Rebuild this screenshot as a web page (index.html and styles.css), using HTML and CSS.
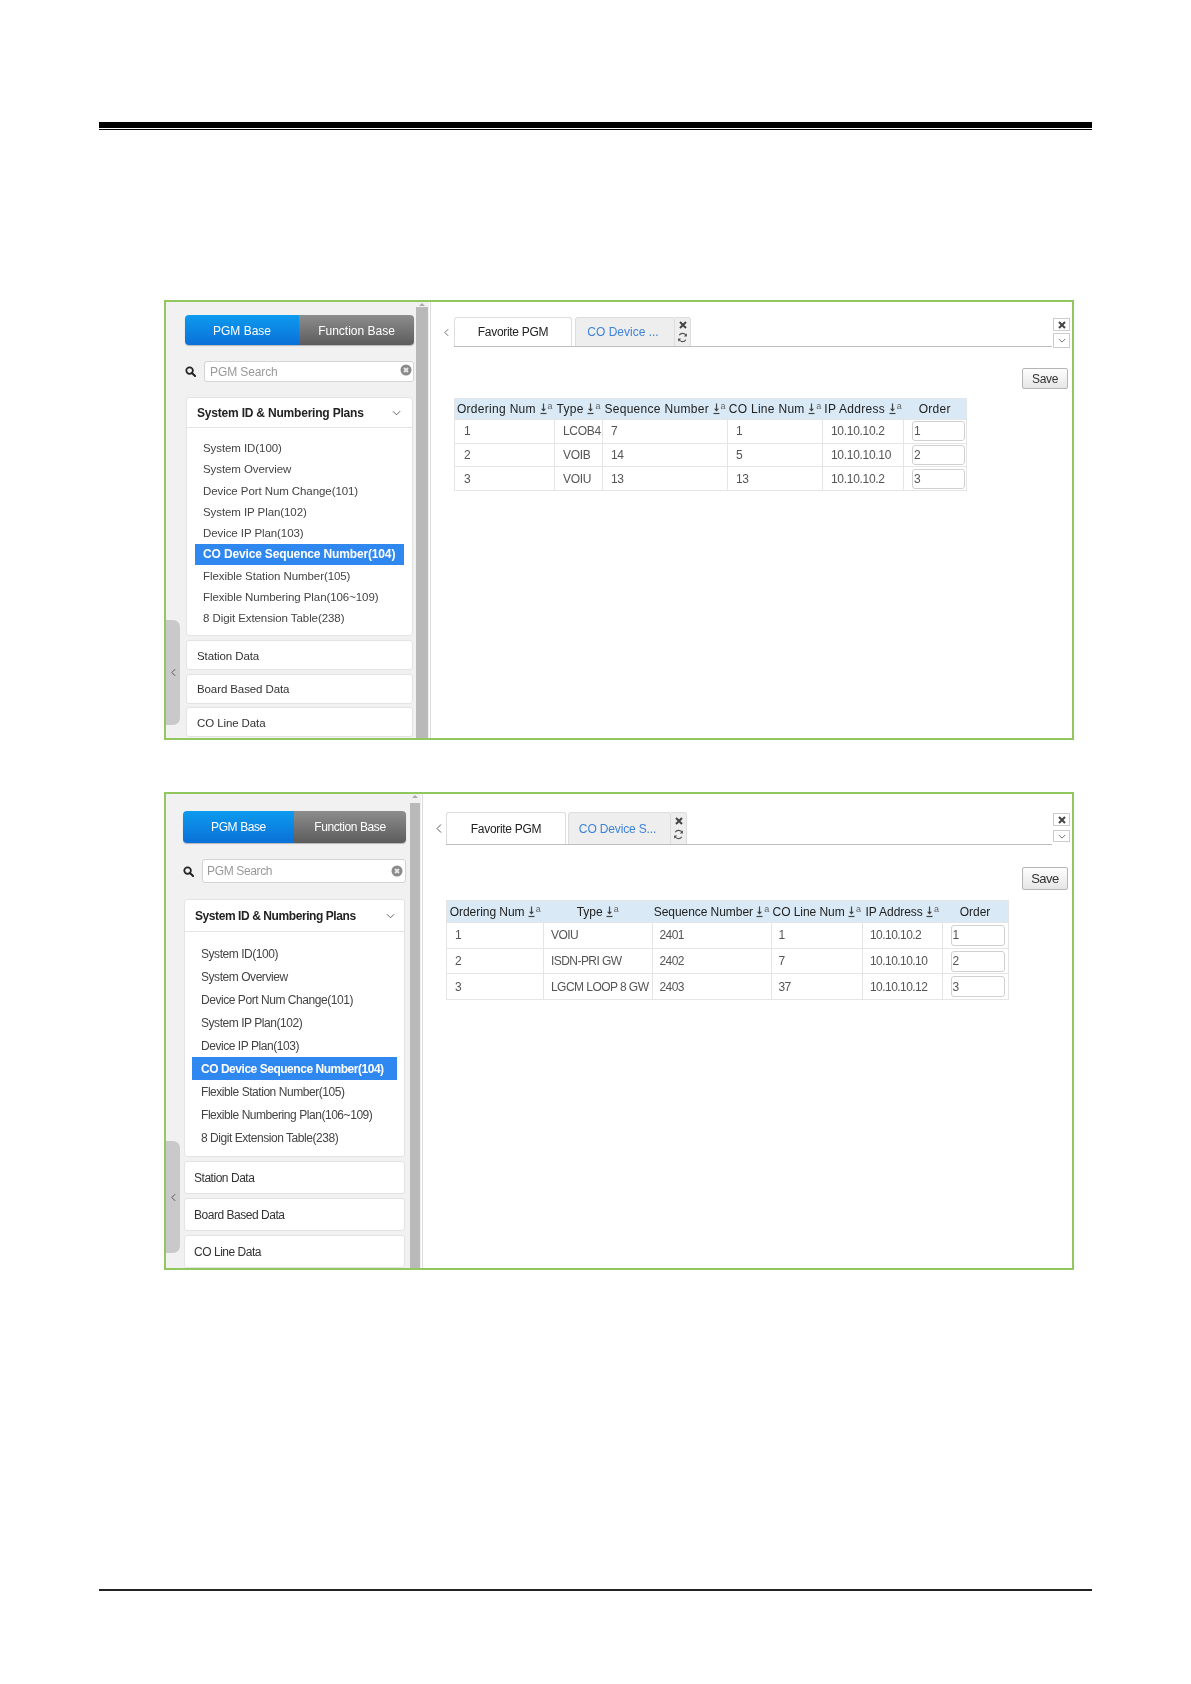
FILE: index.html
```html
<!DOCTYPE html>
<html lang="en">
<head>
<meta charset="utf-8">
<title>CO Device Sequence Number</title>
<link rel="stylesheet" href="styles.css">
</head>
<body>
<svg class="defs" width="0" height="0" aria-hidden="true">
  <symbol id="i-search" viewBox="0 0 12 12"><circle cx="5" cy="5" r="3.6" fill="none" stroke="currentColor" stroke-width="1.9"/><path d="M7.6 7.6 11 11" stroke="currentColor" stroke-width="2.2" stroke-linecap="round"/></symbol>
  <symbol id="i-clear" viewBox="0 0 12 12"><circle cx="6" cy="6" r="5.5" fill="#8a8a8a"/><path d="M4 4l4 4M8 4l-4 4" stroke="#e8e8e8" stroke-width="1.8"/></symbol>
  <symbol id="i-down" viewBox="0 0 10 6"><path d="M1 1l4 4 4-4" fill="none" stroke="currentColor" stroke-width="1"/></symbol>
  <symbol id="i-left" viewBox="0 0 6 10"><path d="M5 1 1 5l4 4" fill="none" stroke="currentColor" stroke-width="1"/></symbol>
  <symbol id="i-x" viewBox="0 0 8 8"><path d="M1 1l6 6M7 1 1 7" stroke="currentColor" stroke-width="2"/></symbol>
  <symbol id="i-refresh" viewBox="0 0 12 12"><path d="M10 4.2A4.2 4.2 0 0 0 2.4 3.6M2 7.8a4.2 4.2 0 0 0 7.6.6" fill="none" stroke="currentColor" stroke-width="1.3"/><path d="M10.8 1.4v3.4H7.4zM1.2 10.6V7.2h3.4z" fill="currentColor"/></symbol>
  <symbol id="i-sort" viewBox="0 0 7 12"><path d="M3.5 1v7" stroke="currentColor" stroke-width="1.2"/><path d="M1 6.2 3.5 9 6 6.2z" fill="currentColor"/><path d="M.5 11h6" stroke="currentColor" stroke-width="1.2"/></symbol>
</svg>

<main class="page">
  <div class="rule-heavy"></div>
  <div class="rule-thin"></div>

  <section class="panel panel-a">
    <aside class="sidebar">
      <div class="segment"><span class="seg seg-on">PGM Base</span><span class="seg seg-off">Function Base</span></div>
      <div class="search">
        <svg class="search-icon"><use href="#i-search"/></svg>
        <div class="search-box"><span>PGM Search</span><svg class="clear-icon"><use href="#i-clear"/></svg></div>
      </div>
      <div class="card">
        <div class="card-head"><span>System ID &amp; Numbering Plans</span><svg class="head-chev"><use href="#i-down"/></svg></div>
        <ul class="menu">
          <li>System ID(100)</li>
          <li>System Overview</li>
          <li>Device Port Num Change(101)</li>
          <li>System IP Plan(102)</li>
          <li>Device IP Plan(103)</li>
          <li class="active">CO Device Sequence Number(104)</li>
          <li>Flexible Station Number(105)</li>
          <li>Flexible Numbering Plan(106~109)</li>
          <li>8 Digit Extension Table(238)</li>
        </ul>
      </div>
      <div class="group">Station Data</div>
      <div class="group">Board Based Data</div>
      <div class="group">CO Line Data</div>
      <div class="handle"><svg class="handle-chev"><use href="#i-left"/></svg></div>
    </aside>
    <div class="scroll"><span class="scroll-arrow"></span><span class="scroll-thumb"></span></div>
    <div class="content">
      <div class="toolbar">
        <svg class="tab-back"><use href="#i-left"/></svg>
        <div class="strip">
          <div class="tab tab-fav">Favorite PGM</div>
          <div class="tab tab-co">CO Device ...</div>
          <div class="tab-tools"><svg class="tool-x"><use href="#i-x"/></svg><svg class="tool-r"><use href="#i-refresh"/></svg></div>
        </div>
        <div class="win">
          <span class="win-btn win-x"><svg class="tool-x"><use href="#i-x"/></svg></span>
          <span class="win-btn win-d"><svg class="win-chev"><use href="#i-down"/></svg></span>
        </div>
      </div>
      <div class="actions"><button class="save" type="button">Save</button></div>
      <table class="grid">
        <colgroup><col class="c1"><col class="c2"><col class="c3"><col class="c4"><col class="c5"><col class="c6"></colgroup>
        <thead><tr>
          <th>Ordering Num <svg class="sort"><use href="#i-sort"/></svg><sup>a</sup></th>
          <th>Type <svg class="sort"><use href="#i-sort"/></svg><sup>a</sup></th>
          <th>Sequence Number <svg class="sort"><use href="#i-sort"/></svg><sup>a</sup></th>
          <th>CO Line Num <svg class="sort"><use href="#i-sort"/></svg><sup>a</sup></th>
          <th>IP Address <svg class="sort"><use href="#i-sort"/></svg><sup>a</sup></th>
          <th>Order</th>
        </tr></thead>
        <tbody>
          <tr><td>1</td><td>LCOB4</td><td>7</td><td>1</td><td>10.10.10.2</td><td class="cell-input"><input class="order" value="1"></td></tr>
          <tr><td>2</td><td>VOIB</td><td>14</td><td>5</td><td>10.10.10.10</td><td class="cell-input"><input class="order" value="2"></td></tr>
          <tr><td>3</td><td>VOIU</td><td>13</td><td>13</td><td>10.10.10.2</td><td class="cell-input"><input class="order" value="3"></td></tr>
        </tbody>
      </table>
    </div>
  </section>

  <section class="panel panel-b">
    <aside class="sidebar">
      <div class="segment"><span class="seg seg-on">PGM Base</span><span class="seg seg-off">Function Base</span></div>
      <div class="search">
        <svg class="search-icon"><use href="#i-search"/></svg>
        <div class="search-box"><span>PGM Search</span><svg class="clear-icon"><use href="#i-clear"/></svg></div>
      </div>
      <div class="card">
        <div class="card-head"><span>System ID &amp; Numbering Plans</span><svg class="head-chev"><use href="#i-down"/></svg></div>
        <ul class="menu">
          <li>System ID(100)</li>
          <li>System Overview</li>
          <li>Device Port Num Change(101)</li>
          <li>System IP Plan(102)</li>
          <li>Device IP Plan(103)</li>
          <li class="active">CO Device Sequence Number(104)</li>
          <li>Flexible Station Number(105)</li>
          <li>Flexible Numbering Plan(106~109)</li>
          <li>8 Digit Extension Table(238)</li>
        </ul>
      </div>
      <div class="group">Station Data</div>
      <div class="group">Board Based Data</div>
      <div class="group">CO Line Data</div>
      <div class="handle"><svg class="handle-chev"><use href="#i-left"/></svg></div>
    </aside>
    <div class="scroll"><span class="scroll-arrow"></span><span class="scroll-thumb"></span></div>
    <div class="content">
      <div class="toolbar">
        <svg class="tab-back"><use href="#i-left"/></svg>
        <div class="strip">
          <div class="tab tab-fav">Favorite PGM</div>
          <div class="tab tab-co">CO Device S...</div>
          <div class="tab-tools"><svg class="tool-x"><use href="#i-x"/></svg><svg class="tool-r"><use href="#i-refresh"/></svg></div>
        </div>
        <div class="win">
          <span class="win-btn win-x"><svg class="tool-x"><use href="#i-x"/></svg></span>
          <span class="win-btn win-d"><svg class="win-chev"><use href="#i-down"/></svg></span>
        </div>
      </div>
      <div class="actions"><button class="save" type="button">Save</button></div>
      <table class="grid">
        <colgroup><col class="c1"><col class="c2"><col class="c3"><col class="c4"><col class="c5"><col class="c6"></colgroup>
        <thead><tr>
          <th>Ordering Num <svg class="sort"><use href="#i-sort"/></svg><sup>a</sup></th>
          <th>Type <svg class="sort"><use href="#i-sort"/></svg><sup>a</sup></th>
          <th>Sequence Number <svg class="sort"><use href="#i-sort"/></svg><sup>a</sup></th>
          <th>CO Line Num <svg class="sort"><use href="#i-sort"/></svg><sup>a</sup></th>
          <th>IP Address <svg class="sort"><use href="#i-sort"/></svg><sup>a</sup></th>
          <th>Order</th>
        </tr></thead>
        <tbody>
          <tr><td>1</td><td>VOIU</td><td>2401</td><td>1</td><td>10.10.10.2</td><td class="cell-input"><input class="order" value="1"></td></tr>
          <tr><td>2</td><td>ISDN-PRI GW</td><td>2402</td><td>7</td><td>10.10.10.10</td><td class="cell-input"><input class="order" value="2"></td></tr>
          <tr><td>3</td><td>LGCM LOOP 8 GW</td><td>2403</td><td>37</td><td>10.10.10.12</td><td class="cell-input"><input class="order" value="3"></td></tr>
        </tbody>
      </table>
    </div>
  </section>

  <div class="rule-foot"></div>
</main>
</body>
</html>
```

FILE: styles.css
```css
* { box-sizing: border-box; }
html, body { margin: 0; padding: 0; background: #fff; }
body { font-family: "Liberation Sans", Arial, sans-serif; font-size: 12px; color: #333; }
.defs { position: absolute; }
svg { display: block; }

.page { width: 1191px; height: 1684px; padding: 122px 99px 0; }
.rule-heavy { height: 6px; background: #000; }
.rule-thin { height: 1px; margin-top: 1px; background: #000; }
.rule-foot { height: 2px; background: #222; margin-top: 319px; }

/* panel shell */
.panel { display: flex; width: 910px; margin-left: 65px; border: 2px solid #92c65f; overflow: hidden; background: #fff; }
.panel-a { height: 440px; margin-top: 170px; }
.panel-b { height: 478px; margin-top: 52px; }

/* sidebar */
.sidebar { position: relative; flex: none; background: #f1f1f1; overflow: hidden; filter: blur(.3px); }
.panel-a .sidebar { width: 250px; padding-top: 13px; }
.panel-b .sidebar { width: 244px; padding-top: 17px; }

.segment { display: flex; border-radius: 4px; overflow: hidden; color: #fff; box-shadow: 0 1px 1px rgba(0,0,0,.25); }
.panel-a .segment { width: 229px; height: 30px; margin-left: 19px; }
.panel-b .segment { width: 223px; height: 32px; margin-left: 17px; letter-spacing: -.4px; }
.seg { display: flex; align-items: center; justify-content: center; }
.seg-on { background: linear-gradient(#0d9bee, #0a70d8); }
.seg-off { flex: 1; background: linear-gradient(#8d8d8d, #5c5c5c); }
.panel-a .seg { padding-top: 2px; }
.panel-a .seg-on { width: 114px; }
.panel-b .seg-on { width: 111px; }

.search { display: flex; align-items: center; }
.panel-a .search { margin: 16px 0 0 19px; gap: 8px; }
.panel-b .search { margin: 16px 0 0 17px; gap: 8px; }
.search-icon { width: 11px; height: 11px; color: #222; flex: none; }
.search-box { display: flex; align-items: center; justify-content: space-between; background: #fff; border: 1px solid #d4d4d4; border-radius: 3px; color: #999; }
.panel-a .search-box { width: 210px; height: 21px; padding: 0 1px 0 5px; letter-spacing: -.1px; }
.panel-b .search-box { width: 204px; height: 24px; padding: 0 2px 0 4px; letter-spacing: -.35px; }
.clear-icon { width: 12px; height: 12px; }
.panel-a .clear-icon { margin-bottom: 3px; }

.card { background: #fff; border: 1px solid #e3e3e3; border-radius: 3px; }
.panel-a .card { width: 227px; height: 239px; margin: 15px 0 0 20px; }
.panel-b .card { width: 221px; height: 258px; margin: 16px 0 0 18px; }
.card-head { display: flex; align-items: center; justify-content: space-between; font-weight: bold; color: #222; border-bottom: 1px solid #e3e3e3; }
.panel-a .card-head { height: 30px; padding: 1px 11px 0 10px; letter-spacing: -.2px; }
.panel-b .card-head { height: 32px; padding: 1px 9px 0 10px; letter-spacing: -.42px; }
.head-chev { width: 9px; height: 6px; color: #555; }

.menu { list-style: none; margin: 0; color: #444; }
.panel-a .menu { padding: 9.5px 8px 0; }
.panel-b .menu { padding: 10px 7px 0; }
.menu li { white-space: nowrap; display: flex; align-items: center; }
.panel-a .menu li { height: 21.25px; padding-left: 8px; font-size: 11.5px; letter-spacing: -.08px; }
.panel-b .menu li { height: 23px; padding-left: 9px; letter-spacing: -.45px; }
.menu .active { background: #2f87f0; color: #fff; font-weight: bold; }
.panel-a .menu .active { font-size: 12px; letter-spacing: -.15px; }
.panel-b .menu .active { letter-spacing: -.47px; }

.group { display: flex; align-items: center; background: #fff; border: 1px solid #e3e3e3; border-radius: 3px; color: #333; }
.panel-a .group { width: 227px; height: 30px; margin: 4px 0 0 20px; padding: 1px 0 0 10px; font-size: 11.5px; letter-spacing: -.1px; }
.panel-a .group + .group { margin-top: 3.5px; }
.panel-b .group { width: 221px; height: 33px; margin: 4px 0 0 18px; padding-left: 9px; letter-spacing: -.47px; }

.handle { position: absolute; left: 0; display: flex; align-items: center; justify-content: center; width: 14px; background: #c9c9cb; border-radius: 0 7px 7px 0; }
.panel-a .handle { top: 318px; height: 105px; }
.panel-b .handle { top: 347px; height: 112px; }
.handle-chev { width: 5px; height: 9px; color: #444; }

/* scrollbar */
.scroll { flex: none; display: flex; flex-direction: column; background: #f1f1f1; border-right: 1px solid #fff; }
.panel-a .scroll { width: 14px; padding-right: 1px; }
.panel-b .scroll { width: 12px; padding-right: 1px; }
.scroll-arrow { display: block; flex: none; align-self: center; width: 0; height: 0; margin-top: 1px; border-left: 3px solid transparent; border-right: 3px solid transparent; border-bottom: 3px solid #aaa; }
.scroll-thumb { display: block; flex: 1; background: #b9b9b9; }
.panel-a .scroll-thumb { margin-top: 1px; }
.panel-b .scroll-thumb { margin-top: 5px; }

/* main */
.content { flex: 1; min-width: 0; border-left: 1px solid #dcdcdc; }
.panel-a .content { padding: 15px 0 0 8px; }
.panel-b .content { padding: 18px 0 0 9px; }
.toolbar, .actions, .grid { filter: blur(.3px); }

.toolbar { display: flex; padding-right: 2px; }
.tab-back { width: 5px; height: 9px; color: #555; flex: none; align-self: center; }
.panel-a .tab-back { margin: 0 5px 0 5px; }
.panel-b .tab-back { width: 6px; height: 11px; margin: 0 4px 0 4px; }
.strip { display: flex; flex: 1; border-bottom: 1px solid #bdbdbd; }
.panel-a .strip { height: 30px; }
.panel-b .strip { height: 33px; }
.tab { display: flex; align-items: center; justify-content: center; border: 1px solid #ddd; border-bottom: 0; border-radius: 3px 3px 0 0; white-space: nowrap; }
.tab-fav { background: #fff; color: #222; }
.tab-co { background: #eee; color: #3f83d8; padding-right: 4px; }
.panel-a .tab-fav { width: 118px; margin-right: 3px; letter-spacing: -.3px; }
.panel-a .tab-co { width: 100px; }
.panel-b .tab-fav { width: 120px; margin-right: 2px; letter-spacing: -.3px; }
.panel-b .tab-co { width: 103px; letter-spacing: -.15px; }
.tab-tools { display: flex; flex-direction: column; align-items: center; justify-content: space-around; background: #eee; border: 1px solid #ddd; border-bottom: 0; border-left: 0; border-radius: 0 3px 0 0; color: #444; padding: 2px 0; }
.panel-a .tab-tools { width: 16px; }
.panel-b .tab-tools { width: 16px; }
.tool-x { width: 8px; height: 8px; color: #444; }
.tool-r { width: 11px; height: 11px; color: #555; }

.win { display: flex; flex-direction: column; flex: none; width: 17px; justify-content: space-between; margin-left: 1px; margin-top: 1px; }
.panel-a .win { height: 30px; }
.panel-b .win { height: 29px; }
.win-btn { display: flex; align-items: center; justify-content: center; border: 1px solid #ccc; background: #fff; }
.panel-a .win-x { height: 13px; }
.panel-a .win-d { height: 15px; }
.panel-b .win-x { height: 13px; }
.panel-b .win-d { height: 12px; }
.win-chev { width: 8px; height: 5px; color: #555; }

.actions { display: flex; justify-content: flex-end; padding-right: 4px; }
.panel-a .actions { margin-top: 20px; }
.panel-b .actions { margin-top: 22px; }
.save { font: inherit; color: #333; background: linear-gradient(#fdfdfd, #e6e6e6); border: 1px solid #b5b5b5; border-radius: 2px; width: 46px; padding: 0; letter-spacing: -.3px; }
.panel-a .save { height: 21px; }
.panel-b .save { height: 23px; font-size: 13px; letter-spacing: -.5px; }

.grid { table-layout: fixed; border-collapse: collapse; color: #555; border: 1px solid #e5e5e5; }
.panel-a .grid { width: 512px; margin: 9px 0 0 15px; }
.panel-b .grid { width: 562px; margin: 10px 0 0 14px; }
.panel-a .c1 { width: 100px; } .panel-a .c2 { width: 48px; } .panel-a .c3 { width: 125px; } .panel-a .c4 { width: 95px; } .panel-a .c5 { width: 81px; } .panel-a .c6 { width: 63px; }
.panel-b .c1 { width: 97px; } .panel-b .c2 { width: 108.5px; } .panel-b .c3 { width: 119px; } .panel-b .c4 { width: 91.5px; } .panel-b .c5 { width: 79.5px; } .panel-b .c6 { width: 66.5px; }
.grid th { background: #d9eaf6; color: #222; font-weight: normal; white-space: nowrap; padding: 0; text-align: center; }
.panel-a .grid th { height: 21px; letter-spacing: .3px; }
.panel-b .grid th { height: 22px; letter-spacing: -.05px; }
.grid .sort { display: inline-block; width: 7px; height: 13px; color: #444; vertical-align: -2px; }
.grid sup { font-size: 9px; line-height: 0; color: #666; vertical-align: 4px; margin-left: 1px; letter-spacing: 0; }
.grid td { border: 1px solid #e5e5e5; white-space: nowrap; overflow: hidden; }
.panel-a .grid td { height: 23.7px; padding: 0 0 0 8px; letter-spacing: -.3px; }
.panel-b .grid td { height: 25.7px; padding: 0 0 0 7px; letter-spacing: -.55px; }
.panel-a .grid td:first-child { padding-left: 9px; }
.panel-b .grid td:first-child { padding-left: 8px; }
.panel-a .grid .cell-input { padding: 0 1px 0 8px; }
.panel-b .grid .cell-input { padding: 0 3px 0 8px; }
.order { display: block; width: 100%; font: inherit; color: #555; border: 1px solid #d0d0d0; border-radius: 3px; padding: 0 0 0 1px; background: #fff; }
.panel-a .order { height: 20px; }
.panel-b .order { height: 21px; }
```
